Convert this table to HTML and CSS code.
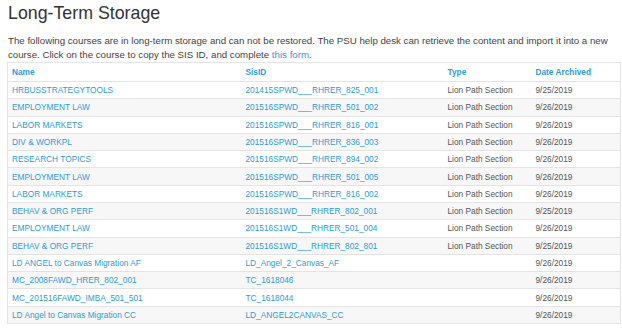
FILE: index.html
```html
<!DOCTYPE html>
<html lang="en">
<head>
    <meta charset="UTF-8">
    <title>Long-Term Storage</title>
    <link rel="stylesheet" href="styles.css">
</head>
<body>
<div class="page">
    <h1>Long-Term Storage</h1>
    <p class="intro">
        The following courses are in long-term storage and can not be restored. The PSU help desk can retrieve the content and import it into a new<br>
        course. Click on the course to copy the SIS ID, and complete <a href="#">this form</a>.
    </p>
    <table class="courses">
        <colgroup>
            <col class="c-name">
            <col class="c-sis">
            <col class="c-type">
            <col class="c-date">
        </colgroup>
        <thead>
        <tr><th>Name</th><th>SisID</th><th>Type</th><th>Date Archived</th></tr>
        </thead>
        <tbody>
        <tr><td><a href="#">HRBUSSTRATEGYTOOLS</a></td><td><a href="#">201415SPWD___RHRER_825_001</a></td><td>Lion Path Section</td><td>9/25/2019</td></tr>
        <tr><td><a href="#">EMPLOYMENT LAW</a></td><td><a href="#">201516SPWD___RHRER_501_002</a></td><td>Lion Path Section</td><td>9/26/2019</td></tr>
        <tr><td><a href="#">LABOR MARKETS</a></td><td><a href="#">201516SPWD___RHRER_816_001</a></td><td>Lion Path Section</td><td>9/26/2019</td></tr>
        <tr><td><a href="#">DIV &amp; WORKPL</a></td><td><a href="#">201516SPWD___RHRER_836_003</a></td><td>Lion Path Section</td><td>9/26/2019</td></tr>
        <tr><td><a href="#">RESEARCH TOPICS</a></td><td><a href="#">201516SPWD___RHRER_894_002</a></td><td>Lion Path Section</td><td>9/26/2019</td></tr>
        <tr><td><a href="#">EMPLOYMENT LAW</a></td><td><a href="#">201516SPWD___RHRER_501_005</a></td><td>Lion Path Section</td><td>9/26/2019</td></tr>
        <tr><td><a href="#">LABOR MARKETS</a></td><td><a href="#">201516SPWD___RHRER_816_002</a></td><td>Lion Path Section</td><td>9/26/2019</td></tr>
        <tr><td><a href="#">BEHAV &amp; ORG PERF</a></td><td><a href="#">201516S1WD___RHRER_802_001</a></td><td>Lion Path Section</td><td>9/25/2019</td></tr>
        <tr><td><a href="#">EMPLOYMENT LAW</a></td><td><a href="#">201516S1WD___RHRER_501_004</a></td><td>Lion Path Section</td><td>9/26/2019</td></tr>
        <tr><td><a href="#">BEHAV &amp; ORG PERF</a></td><td><a href="#">201516S1WD___RHRER_802_801</a></td><td>Lion Path Section</td><td>9/25/2019</td></tr>
        <tr><td><a href="#">LD ANGEL to Canvas Migration AF</a></td><td><a href="#">LD_Angel_2_Canvas_AF</a></td><td></td><td>9/26/2019</td></tr>
        <tr><td><a href="#">MC_2008FAWD_HRER_802_001</a></td><td><a href="#">TC_1618046</a></td><td></td><td>9/26/2019</td></tr>
        <tr><td><a href="#">MC_201516FAWD_IMBA_501_501</a></td><td><a href="#">TC_1618044</a></td><td></td><td>9/26/2019</td></tr>
        <tr><td><a href="#">LD Angel to Canvas Migration CC</a></td><td><a href="#">LD_ANGEL2CANVAS_CC</a></td><td></td><td>9/26/2019</td></tr>
        </tbody>
    </table>
</div>
</body>
</html>
```

FILE: styles.css
```css
body {
    margin: 0;
    font-family: "Liberation Sans", Arial, sans-serif;
    color: #444;
    background-color: #fff;
}
a {
    color: #2f9ad9;
    text-decoration: none;
}
.page {
    padding: 0 2px 0 7px;
}
h1 {
    margin: 0;
    padding: 2px 0 0 1px;
    font-size: 17.8px;
    font-weight: normal;
    line-height: 22px;
    color: #333;
}
.intro {
    margin: 10px 0 0 0;
    padding-left: 1px;
    font-size: 9.7px;
    line-height: 14px;
    color: #444;
    white-space: nowrap;
}
.courses {
    width: 613px;
    border-collapse: collapse;
    border: 1px solid #e4e4e4;
    font-size: 8.3px;
    table-layout: fixed;
}
.c-name { width: 234px; }
.c-sis { width: 202px; }
.c-type { width: 88px; }
.c-date { width: 89px; }
.courses th {
    text-align: left;
    font-weight: bold;
    font-size: 8.3px;
    color: #2f9ad9;
    padding: 2.5px 4px 3.5px 4px;
    line-height: 12px;
    border-bottom: 1px solid #e4e4e4;
}
.courses td {
    padding: 2.15px 4px;
    line-height: 12px;
    color: #555;
    border-top: 1px solid #e4e4e4;
    white-space: nowrap;
    overflow: hidden;
}
.courses tbody tr:nth-child(even) {
    background-color: #f7f7f7;
}
```
